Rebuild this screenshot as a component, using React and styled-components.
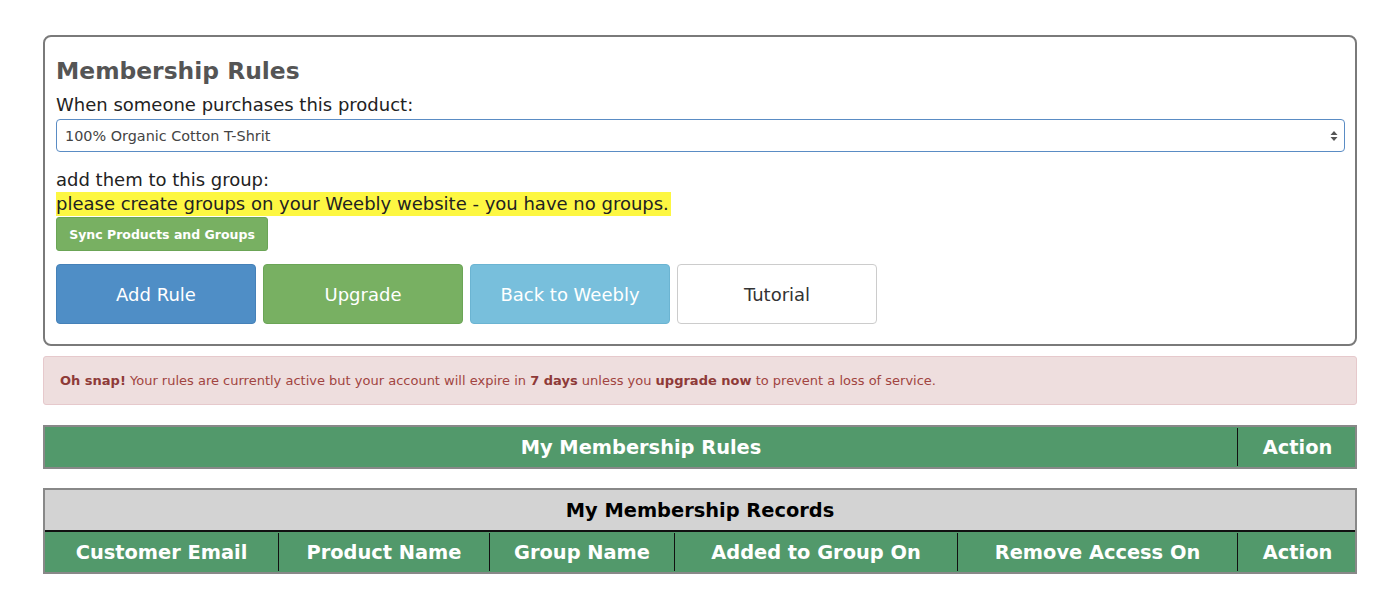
import React from 'react'
import styled, { createGlobalStyle } from 'styled-components'

const GlobalStyle = createGlobalStyle`
  body {
    margin: 0;
    background: #fff;
    font-family: "DejaVu Sans", Verdana, sans-serif;
    color: #333;
  }
`

const App = () => {
  const recordCols = [
    { title: 'Customer Email', width: 234 },
    { title: 'Product Name', width: 211 },
    { title: 'Group Name', width: 185 },
    { title: 'Added to Group On', width: 283 },
    { title: 'Remove Access On', width: 280 },
    { title: 'Action', width: 119 },
  ]

  return (
    <Page>
      <GlobalStyle />
      <Card>
        <Heading>Membership Rules</Heading>
        <FieldLabel>When someone purchases this product:</FieldLabel>
        <SelectBox>
          <span>100% Organic Cotton T-Shrit</span>
          <Arrows>
            <svg width="8" height="12" viewBox="0 0 8 12">
              <path d="M4 1 L7.5 5 H0.5 Z" fill="#555" />
              <path d="M4 11 L7.5 7 H0.5 Z" fill="#555" />
            </svg>
          </Arrows>
        </SelectBox>
        <FieldLabel $top={16}>add them to this group:</FieldLabel>
        <Highlight>please create groups on your Weebly website - you have no groups.</Highlight>
        <SyncButton>Sync Products and Groups</SyncButton>
        <ButtonRow>
          <BigButton $bg="#4f8ec6" $border="#4581b8" $color="#fff">Add Rule</BigButton>
          <BigButton $bg="#78b062" $border="#6ba556" $color="#fff">Upgrade</BigButton>
          <BigButton $bg="#78bfdc" $border="#6bb4d2" $color="#fff">Back to Weebly</BigButton>
          <BigButton $bg="#fff" $border="#ccc" $color="#333">Tutorial</BigButton>
        </ButtonRow>
      </Card>

      <Alert>
        <b>Oh snap!</b> Your rules are currently active but your account will expire in <b>7 days</b> unless you <b>upgrade now</b> to prevent a loss of service.
      </Alert>

      <Table>
        <HeadRow>
          <HeadCell $width={1193}>My Membership Rules</HeadCell>
          <HeadCell $width={119} $last>Action</HeadCell>
        </HeadRow>
      </Table>

      <Table $top={19}>
        <TitleRow>My Membership Records</TitleRow>
        <HeadRow>
          {recordCols.map((c, i) => (
            <HeadCell key={c.title} $width={c.width} $last={i === recordCols.length - 1}>
              {c.title}
            </HeadCell>
          ))}
        </HeadRow>
      </Table>
    </Page>
  )
}

const Page = styled.div`
  width: 1314px;
  padding: 35px 0 0 43px;
`

const Card = styled.div`
  border: 2px solid #7a7a7a;
  border-radius: 8px;
  padding: 16px 10px 19px 11px;
  height: 272px;
`

const Heading = styled.h2`
  margin: 0 0 4px 0;
  font-size: 23.4px;
  font-weight: bold;
  color: #555;
  line-height: 36px;
`

const FieldLabel = styled.div`
  font-size: 18px;
  line-height: 24px;
  color: #222;
  margin-top: ${props => props.$top || 0}px;
`

const SelectBox = styled.div`
  display: flex;
  align-items: center;
  justify-content: space-between;
  height: 31px;
  border: 1px solid #5a8cc4;
  border-radius: 4px;
  padding: 0 6px 0 8px;
  margin-top: 2px;
  font-size: 14.4px;
  color: #444;
`

const Arrows = styled.span`
  display: flex;
  align-items: center;
`

const Highlight = styled.div`
  width: fit-content;
  background: #fdf742;
  color: #222;
  font-size: 18px;
  line-height: 24px;
  padding-right: 2px;
`

const SyncButton = styled.button`
  display: block;
  height: 34px;
  width: 212px;
  margin-top: 1px;
  background: #78b062;
  border: 1px solid #6ba556;
  border-radius: 3px;
  color: #fff;
  font-family: "DejaVu Sans", Verdana, sans-serif;
  font-size: 12.5px;
  font-weight: bold;
  padding: 0;
`

const ButtonRow = styled.div`
  display: flex;
  gap: 7px;
  margin-top: 13px;
`

const BigButton = styled.button`
  width: 200px;
  height: 60px;
  background: ${props => props.$bg};
  border: 1px solid ${props => props.$border};
  border-radius: 4px;
  color: ${props => props.$color};
  font-family: "DejaVu Sans", Verdana, sans-serif;
  font-size: 18px;
  padding: 0;
`

const Alert = styled.div`
  margin-top: 10px;
  height: 49px;
  box-sizing: border-box;
  display: flex;
  align-items: center;
  padding: 0 16px;
  background: #eedede;
  border: 1px solid #e6c9cc;
  border-radius: 3px;
  color: #a14441;
  font-size: 13px;
  white-space: pre;

  b {
    font-weight: bold;
    color: #8e3a38;
  }
`

const Table = styled.div`
  margin-top: ${props => props.$top || 20}px;
  border: 2px solid #888;
`

const HeadRow = styled.div`
  display: flex;
  background: #52996b;
  height: 40px;
`

const HeadCell = styled.div`
  width: ${props => props.$width}px;
  flex-shrink: 0;
  display: flex;
  align-items: center;
  justify-content: center;
  color: #fff;
  font-size: 19.4px;
  font-weight: bold;
  border-right: ${props => (props.$last ? 'none' : '1px solid #111')};
  margin: 1px 0;
  box-sizing: border-box;
`

const TitleRow = styled.div`
  height: 40px;
  display: flex;
  align-items: center;
  justify-content: center;
  background: #d3d3d3;
  border-bottom: 2px solid #111;
  color: #000;
  font-size: 19.4px;
  font-weight: bold;
`

export default App
